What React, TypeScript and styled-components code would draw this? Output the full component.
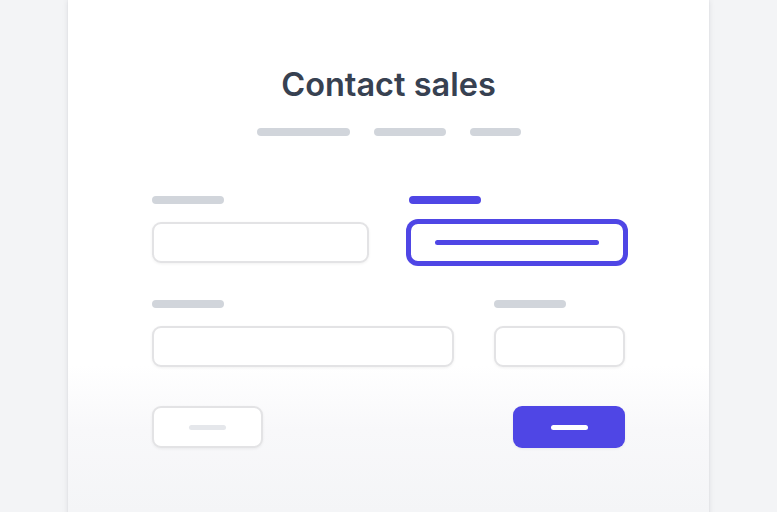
import React from "react";
import styled, { createGlobalStyle } from "styled-components";

const Global = createGlobalStyle`
  html, body { margin: 0; padding: 0; background: #f3f4f6; overflow: hidden; }
  body { font-family: Inter, "Noto Sans", sans-serif; }
`;

const Page = styled.div`
  height: 512px;
  overflow: hidden;
  display: flex;
  justify-content: center;
`;

const Card = styled.div`
  width: 641px;
  height: 560px;
  background: linear-gradient(
    to bottom,
    #ffffff 0px,
    #ffffff 365px,
    #f8f8fa 430px,
    #f4f5f7 512px
  );
  box-shadow: 0 0 6px rgba(17, 24, 39, 0.1), 0 0 1px rgba(17, 24, 39, 0.08);
  padding: 64px 84px 0;
  box-sizing: border-box;
  display: flex;
  flex-direction: column;
`;

const Title = styled.h1`
  margin: 0;
  text-align: center;
  font-size: 32.5px;
  line-height: 42px;
  font-weight: 600;
  color: #374151;
`;

const PillRow = styled.div`
  display: flex;
  justify-content: center;
  gap: 24px;
  margin-top: 22px;
`;

const Pill = styled.div<{ $w: number; $color?: string }>`
  width: ${(p) => p.$w}px;
  height: 8px;
  border-radius: 4px;
  background: ${(p) => p.$color ?? "#d1d5db"};
`;

const Form = styled.div`
  display: flex;
  flex-direction: column;
  gap: 37px;
  margin-top: 60px;
`;

const Row = styled.div<{ $cols: string }>`
  display: grid;
  grid-template-columns: ${(p) => p.$cols};
  column-gap: 40px;
`;

const Field = styled.div`
  display: flex;
  flex-direction: column;
  gap: 18px;
`;

const Input = styled.div<{ $focused?: boolean }>`
  height: 41px;
  box-sizing: border-box;
  border-radius: 9px;
  background: #fff;
  border: 2px solid ${(p) => (p.$focused ? "#4f46e5" : "#e3e3e5")};
  box-shadow: ${(p) =>
    p.$focused ? "0 0 0 3px #4f46e5" : "0 1px 3px rgba(0,0,0,0.06)"};
  display: flex;
  align-items: center;
  padding: 0 24px;
`;

const InputLine = styled.div`
  flex: 1;
  height: 5px;
  border-radius: 3px;
  background: #4f46e5;
`;

const Actions = styled.div`
  display: flex;
  justify-content: space-between;
  margin-top: 39px;
`;

const Button = styled.div<{ $primary?: boolean }>`
  width: ${(p) => (p.$primary ? 112 : 111)}px;
  height: 42px;
  box-sizing: border-box;
  border-radius: 9px;
  background: ${(p) => (p.$primary ? "#4f46e5" : "#fff")};
  border: ${(p) => (p.$primary ? "none" : "2px solid #e3e3e5")};
  box-shadow: 0 1px 3px rgba(0, 0, 0, 0.06);
  display: flex;
  align-items: center;
  justify-content: center;
`;

const ButtonLine = styled.div<{ $primary?: boolean }>`
  width: 37px;
  height: 5px;
  border-radius: 3px;
  background: ${(p) => (p.$primary ? "#ffffff" : "#e5e7eb")};
`;

export default function App() {
  return (
    <>
      <Global />
      <Page>
        <Card>
          <Title>Contact sales</Title>
          <PillRow>
            <Pill $w={93} />
            <Pill $w={72} />
            <Pill $w={51} />
          </PillRow>
          <Form>
            <Row $cols="1fr 1fr">
              <Field>
                <Pill $w={72} />
                <Input />
              </Field>
              <Field>
                <Pill $w={72} $color="#4f46e5" />
                <Input $focused>
                  <InputLine />
                </Input>
              </Field>
            </Row>
            <Row $cols="302px 1fr">
              <Field>
                <Pill $w={72} />
                <Input />
              </Field>
              <Field>
                <Pill $w={72} />
                <Input />
              </Field>
            </Row>
          </Form>
          <Actions>
            <Button>
              <ButtonLine />
            </Button>
            <Button $primary>
              <ButtonLine $primary />
            </Button>
          </Actions>
        </Card>
      </Page>
    </>
  );
}
